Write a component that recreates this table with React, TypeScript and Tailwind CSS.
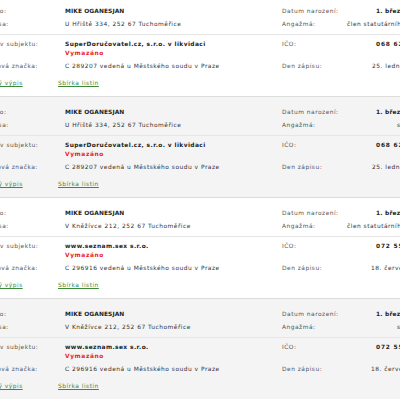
import React from "react";

interface Record {
  bg: string;
  address: string;
  subject: string;
  file: string;
  ico: string;
  role: string;
  roleCls: string;
  date: string;
  dateCls: string;
}

const RECORDS: Record[] = [
  {
    bg: "bg-white",
    address: "U Hřiště 334, 252 67 Tuchoměřice",
    subject: "SuperDoručovatel.cz, s.r.o. v likvidaci",
    file: "C 289207 vedená u Městského soudu v Praze",
    ico: "068 62 171",
    role: "člen statutárního orgánu",
    roleCls: "-ml-[29px]",
    date: "25. ledna 2018",
    dateCls: "-ml-[4px]",
  },
  {
    bg: "bg-[#f4f4f4]",
    address: "U Hřiště 334, 252 67 Tuchoměřice",
    subject: "SuperDoručovatel.cz, s.r.o. v likvidaci",
    file: "C 289207 vedená u Městského soudu v Praze",
    ico: "068 62 171",
    role: "společník",
    roleCls: "ml-[21px]",
    date: "25. ledna 2018",
    dateCls: "-ml-[4px]",
  },
  {
    bg: "bg-white",
    address: "V Kněžívce 212, 252 67 Tuchoměřice",
    subject: "www.seznam.sex s.r.o.",
    file: "C 296916 vedená u Městského soudu v Praze",
    ico: "072 55 071",
    role: "člen statutárního orgánu",
    roleCls: "-ml-[29px]",
    date: "18. července 2018",
    dateCls: "-ml-[5px]",
  },
  {
    bg: "bg-[#f4f4f4]",
    address: "V Kněžívce 212, 252 67 Tuchoměřice",
    subject: "www.seznam.sex s.r.o.",
    file: "C 296916 vedená u Městského soudu v Praze",
    ico: "072 55 071",
    role: "společník",
    roleCls: "ml-[21px]",
    date: "18. července 2018",
    dateCls: "-ml-[5px]",
  },
];

const ROW = "grid grid-cols-[82px_217px_94px_1fr] whitespace-nowrap";
const LABEL = "text-[#555] tracking-[0.5px]";
const TEXT = "text-[#333] tracking-[0.5px]";
const BOLD = "font-bold text-[#222] tracking-[0.4px]";

function Card({ r }: { r: Record }) {
  return (
    <div className={`${r.bg} border-t border-[#dcdcdc] pt-[11px] pb-[8px]`}>
      {/* person */}
      <div className="flex flex-col gap-[4px] pb-[5px] border-b border-[#e6e6e6]">
        <div className={ROW}>
          <span className={LABEL}>Jméno:</span>
          <span className="font-bold text-[#222] tracking-[0.1px]">MIKE OGANESJAN</span>
          <span className={LABEL}>Datum narození:</span>
          <span className="font-bold text-[#222] tracking-[0.2px]">1. března 1988</span>
        </div>
        <div className={ROW}>
          <span className={LABEL}>Adresa:</span>
          <span className={TEXT}>{r.address}</span>
          <span className={LABEL}>Angažmá:</span>
          <span className={`${TEXT} ${r.roleCls}`}>{r.role}</span>
        </div>
      </div>

      {/* subject */}
      <div className="flex flex-col pt-[5px]">
        <div className={ROW}>
          <span className={LABEL}>Role v subjektu:</span>
          <div className="flex flex-col">
            <span className={BOLD}>{r.subject}</span>
            <span className="font-bold text-[#e8231b] tracking-[0.6px]">Vymazáno</span>
          </div>
          <span className={LABEL}>IČO:</span>
          <span className="font-bold text-[#222] tracking-[0.8px]">{r.ico}</span>
        </div>
        <div className={`${ROW} mt-[4px]`}>
          <span className={LABEL}>Spisová značka:</span>
          <span className={TEXT}>{r.file}</span>
          <span className={LABEL}>Den zápisu:</span>
          <span className={`${TEXT} ${r.dateCls}`}>{r.date}</span>
        </div>
        <div className="flex mt-[8px] whitespace-nowrap tracking-[0.5px]">
          <a href="#" className="w-[75px] text-[#3d8a3d] underline">
            Úplný výpis
          </a>
          <a href="#" className="text-[#3d8a3d] underline">
            Sbírka listin
          </a>
        </div>
      </div>
    </div>
  );
}

export default function App() {
  return (
    <div className="w-[400px] h-[400px] overflow-hidden bg-white">
      <div
        className="-mt-[5px] -ml-[17px] w-[540px] text-[5.9px] leading-[9px]"
        style={{ fontFamily: '"DejaVu Sans", Verdana, sans-serif' }}
      >
        {RECORDS.map((r, i) => (
          <Card key={i} r={r} />
        ))}
      </div>
    </div>
  );
}
